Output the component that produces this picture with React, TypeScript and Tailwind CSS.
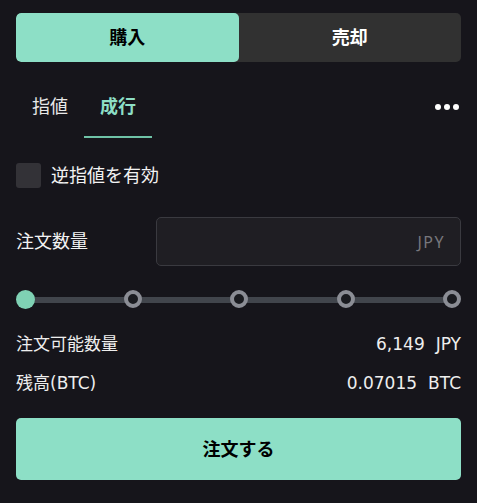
import { useState } from "react";

const font = "font-['DejaVu_Sans','Noto_Sans_CJK_JP',sans-serif]";

const steps = [0, 25, 50, 75, 100];

export default function App() {
  const [side, setSide] = useState<"buy" | "sell">("buy");
  const [type, setType] = useState<"limit" | "market">("market");
  const [stop, setStop] = useState(false);
  const [pct, setPct] = useState(0);

  return (
    <div className={`w-[477px] h-[503px] bg-[#16151b] px-4 pt-[13px] text-white ${font}`}>
      <div className="flex h-[49px] rounded-[5px] bg-[#313131] overflow-hidden">
        <button
          onClick={() => setSide("buy")}
          className={`flex-1 rounded-[5px] text-[18px] font-bold ${
            side === "buy" ? "bg-[#8ddfc6] text-black" : "text-white"
          }`}
        >
          購入
        </button>
        <button
          onClick={() => setSide("sell")}
          className={`flex-1 rounded-[5px] text-[18px] font-bold ${
            side === "sell" ? "bg-[#8ddfc6] text-black" : "text-white"
          }`}
        >
          売却
        </button>
      </div>

      <div className="flex items-start justify-between mt-[28px] h-[48px]">
        <div className="flex">
          <button
            onClick={() => setType("limit")}
            className={`w-[68px] h-[48px] pb-[14px] text-[18px] border-b-2 ${
              type === "limit" ? "text-[#8ddfc6] border-[#6fc2a7]" : "text-[#e8e8e8] border-transparent"
            }`}
          >
            指値
          </button>
          <button
            onClick={() => setType("market")}
            className={`w-[68px] h-[48px] pb-[14px] text-[18px] font-bold border-b-2 ${
              type === "market" ? "text-[#8ddfc6] border-[#6fc2a7]" : "text-[#e8e8e8] border-transparent"
            }`}
          >
            成行
          </button>
        </div>
        <div className="flex gap-[3px] pt-[14px] pr-[2px]">
          <span className="w-[6px] h-[6px] rounded-full bg-white" />
          <span className="w-[6px] h-[6px] rounded-full bg-white" />
          <span className="w-[6px] h-[6px] rounded-full bg-white" />
        </div>
      </div>

      <label className="flex items-center gap-[10px] mt-[24px] cursor-pointer">
        <span
          onClick={() => setStop(!stop)}
          className={`w-[25px] h-[25px] rounded-[3px] ${stop ? "bg-[#8ddfc6]" : "bg-[#333237]"}`}
        />
        <span className="text-[18px] text-[#f2f2f2]">逆指値を有効</span>
      </label>

      <div className="flex items-center justify-between mt-[28px]">
        <span className="text-[18px] text-[#f2f2f2]">注文数量</span>
        <div className="flex items-center justify-end w-[305px] h-[49px] rounded-[5px] border border-[#3a3a40] bg-[#1f1e23] pr-[15px]">
          <span className="text-[16px] tracking-[1.5px] text-[#77777c] font-['Noto_Sans',sans-serif]">JPY</span>
        </div>
      </div>

      <div className="relative h-[20px] mt-[24px]">
        <div className="absolute left-[9px] right-[9px] top-[7px] h-[6px] bg-[#41454c]" />
        <div className="relative flex justify-between h-full">
          {steps.map((s) =>
            s <= pct ? (
              <button
                key={s}
                onClick={() => setPct(s)}
                className="w-[19px] h-[19px] rounded-full bg-[#7fd1b4]"
              />
            ) : (
              <button
                key={s}
                onClick={() => setPct(s)}
                className="w-[18px] h-[18px] rounded-full border-[4px] border-[#8b8d95] bg-[#1a1b20]"
              />
            )
          )}
        </div>
      </div>

      <div className="flex items-center justify-between mt-[22px] text-[17px] text-[#eeeeee]">
        <span>注文可能数量</span>
        <span className="flex gap-[11px]">
          <span>6,149</span>
          <span>JPY</span>
        </span>
      </div>
      <div className="flex items-center justify-between mt-[13px] text-[17px] text-[#eeeeee]">
        <span>残高(BTC)</span>
        <span className="flex gap-[11px]">
          <span>0.07015</span>
          <span>BTC</span>
        </span>
      </div>

      <button className="w-full h-[62px] mt-[22px] rounded-[5px] bg-[#8ddfc6] text-black text-[18px] font-bold">
        注文する
      </button>
    </div>
  );
}
